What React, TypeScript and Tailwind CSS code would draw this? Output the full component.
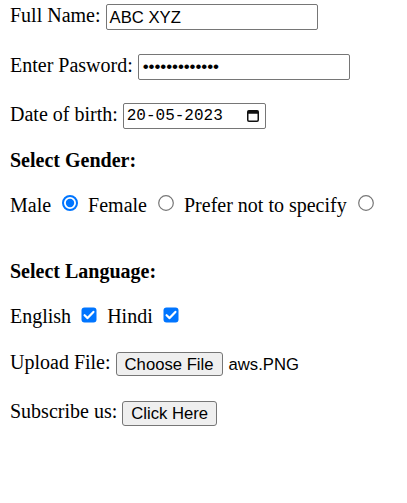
import React from 'react';

const serif = { fontFamily: '"Liberation Serif", "Times New Roman", serif' };
const sans = { fontFamily: '"Liberation Sans", Arial, sans-serif' };

const Label: React.FC<{ children: React.ReactNode; bold?: boolean; shift?: string }> = ({ children, bold, shift = '' }) => (
  <span className={`text-[20px] leading-[23px] whitespace-pre ${bold ? 'font-bold' : ''} ${shift}`} style={serif}>
    {children}
  </span>
);

const Radio: React.FC<{ checked?: boolean }> = ({ checked }) => (
  <svg width="16" height="16" viewBox="0 0 16 16" className="ml-[11px] mr-[10px] mb-[5px] shrink-0">
    {checked ? (
      <>
        <circle cx="8" cy="8" r="7" fill="#ffffff" stroke="#0075ff" strokeWidth="2" />
        <circle cx="8" cy="8" r="4.2" fill="#0075ff" />
      </>
    ) : (
      <circle cx="8" cy="8" r="7.3" fill="#ffffff" stroke="#767676" strokeWidth="1.2" />
    )}
  </svg>
);

const Checkbox: React.FC = () => (
  <svg width="16" height="16" viewBox="0 0 16 16" className="ml-[10px] mr-[10px] mb-[3.5px] shrink-0">
    <rect x="0.5" y="0.5" width="15" height="15" rx="3" fill="#0075ff" />
    <path d="M3.6 8.2 L6.6 11.1 L12.4 4.9" fill="none" stroke="#ffffff" strokeWidth="2.2" strokeLinecap="round" strokeLinejoin="round" />
  </svg>
);

const TextBox: React.FC<{ width: string; children: React.ReactNode }> = ({ width, children }) => (
  <div
    className={`${width} h-[26px] ml-[5px] border border-[#767676] rounded-[2px] px-[3px] flex items-center text-[16.67px] text-black bg-white`}
    style={sans}
  >
    {children}
  </div>
);

const Button: React.FC<{ width: string; height: string; children: React.ReactNode }> = ({ width, height, children }) => (
  <button
    className={`${width} ${height} ml-[5px] border border-[#767676] rounded-[3px] bg-[#efefef] flex items-center justify-center text-[16.67px] text-black`}
    style={sans}
  >
    {children}
  </button>
);

export default function App() {
  return (
    <div className="min-h-[503px] bg-white text-black pl-[10px]">
      <div className="h-[4px]" />

      {/* Full name */}
      <div className="flex items-center h-[26px]">
        <Label shift="mb-[3.5px]">Full Name:</Label>
        <TextBox width="w-[212px]">ABC XYZ</TextBox>
      </div>

      {/* Password */}
      <div className="flex items-center h-[26px] mt-[24px]">
        <Label shift="mb-[3.5px]">Enter Pasword:</Label>
        <TextBox width="w-[212px]">
          <span className="pl-[1px] text-[17px] tracking-[-0.1px]">•••••••••••••</span>
        </TextBox>
      </div>

      {/* Date */}
      <div className="flex items-center h-[26px] mt-[23px]">
        <Label shift="mb-[3.5px]">Date of birth:</Label>
        <div className="w-[143px] h-[26px] ml-[5px] border border-[#767676] rounded-[2px] flex items-center justify-between pl-[3px] pr-[6px] bg-white">
          <span className="text-[16px] text-black" style={{ fontFamily: '"Liberation Mono", "DejaVu Sans Mono", monospace' }}>
            20-05-2023
          </span>
          <svg width="12" height="12" viewBox="0 0 12 12">
            <rect x="0.75" y="0.75" width="10.5" height="10.5" rx="1.2" fill="none" stroke="#111" strokeWidth="1.5" />
            <rect x="0.75" y="0.75" width="10.5" height="3" fill="#111" />
          </svg>
        </div>
      </div>

      {/* Gender */}
      <div className="flex items-center h-[23px] mt-[20px]">
        <Label bold>Select Gender:</Label>
      </div>
      <div className="flex items-center h-[23px] mt-[22px]">
        <Label>Male</Label>
        <Radio checked />
        <Label>Female</Label>
        <Radio />
        <Label>Prefer not to specify</Label>
        <Radio />
      </div>

      {/* Language */}
      <div className="flex items-center h-[23px] mt-[43px]">
        <Label bold>Select Language:</Label>
      </div>
      <div className="flex items-center h-[23px] mt-[22px]">
        <Label>English</Label>
        <Checkbox />
        <Label>Hindi</Label>
        <Checkbox />
      </div>

      {/* Upload */}
      <div className="flex items-center h-[24px] mt-[24px]">
        <Label shift="mb-[4px]">Upload File:</Label>
        <Button width="w-[107px]" height="h-[24px]">Choose File</Button>
        <span className="ml-[6px] text-[16.67px]" style={sans}>aws.PNG</span>
      </div>

      {/* Subscribe */}
      <div className="flex items-center h-[25px] mt-[25px]">
        <Label shift="mb-[5px]">Subscribe us:</Label>
        <Button width="w-[95px]" height="h-[25px]">Click Here</Button>
      </div>
    </div>
  );
}
